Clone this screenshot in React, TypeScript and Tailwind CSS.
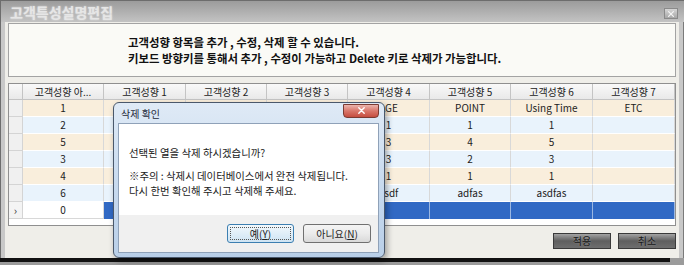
import React from "react";

const font = "font-['Noto_Sans_CJK_KR',sans-serif]";

const headers = ["고객성향 아...", "고객성향 1", "고객성향 2", "고객성향 3", "고객성향 4", "고객성향 5", "고객성향 6", "고객성향 7"];

// columns 1-3 sit under the confirm dialog, so they stay blank
const rows: string[][] = [
  ["1", "", "", "", "AGE", "POINT", "Using Time", "ETC"],
  ["2", "", "", "", "1", "1", "1", ""],
  ["5", "", "", "", "3", "4", "5", ""],
  ["3", "", "", "", "3", "2", "3", ""],
  ["4", "", "", "", "1", "1", "1", ""],
  ["6", "", "", "", "asdf", "adfas", "asdfas", ""],
];

const gridCols = "grid grid-cols-[14px_81px_82px_81px_81px_82px_81px_82px_82px]";

const CloseX: React.FC<{ size: number; stroke: string }> = ({ size, stroke }) => (
  <svg width={size} height={size} viewBox="0 0 10 10">
    <path d="M2 2 L8 8 M8 2 L2 8" stroke={stroke} strokeWidth="1.6" strokeLinecap="round" />
  </svg>
);

const DataGrid: React.FC = () => (
  <div className="h-[143px] border border-[#8f8f8f] bg-white overflow-hidden">
    <div className={`${gridCols} h-[16px] text-[10px] leading-none text-[#222]`}>
      <div className="border-r border-b border-[#c4c4c4] bg-gradient-to-b from-[#f9f9f9] to-[#e9e9e9]" />
      {headers.map((h) => (
        <div
          key={h}
          className="flex items-center justify-center border-r border-b border-[#c4c4c4] bg-gradient-to-b from-[#f9f9f9] to-[#e9e9e9]"
        >
          {h}
        </div>
      ))}
    </div>
    {rows.map((r, i) => (
      <div key={i} className={`${gridCols} h-[17px] text-[10px] leading-none text-[#222]`}>
        <div className="border-r border-b border-[#d4d4d4] bg-[#f0f0f0]" />
        {r.map((c, j) => (
          <div
            key={j}
            className={`flex items-center justify-center border-r border-b border-r-[#d8d8d8] border-b-white ${
              i % 2 === 0 ? "bg-[#f9eedc]" : "bg-[#e9f3fc]"
            }`}
          >
            {c}
          </div>
        ))}
      </div>
    ))}
    <div className={`${gridCols} h-[17px] text-[10px] leading-none text-[#222]`}>
      <div className="flex items-center justify-center border-r border-b border-[#d4d4d4] bg-[#f4f4f4] text-[11px] text-[#333]">
        ›
      </div>
      <div className="flex items-center justify-center border-r border-b border-[#d8d8d8] bg-white">0</div>
      {[1, 2, 3, 4, 5, 6, 7].map((k) => (
        <div key={k} className="border-r border-[#9bb7e2] bg-[#3169c4]" />
      ))}
    </div>
  </div>
);

const ConfirmDialog: React.FC = () => (
  <div className="absolute left-[113px] top-[102px] w-[272px] h-[156px] rounded-[6px] border border-[#4a586b] bg-gradient-to-b from-[#dfeaf6] via-[#c9dbef] to-[#b9cfe8] shadow-[2px_3px_6px_rgba(0,0,0,0.35)]">
    <div className="flex h-[20px] items-center justify-between pl-[7px] pr-[5px]">
      <span className="text-[10px] leading-none text-[#1e2a3a] pt-[2px]">삭제 확인</span>
      <div className="flex h-[14px] w-[36px] -mt-[5px] items-center justify-center rounded-b-[4px] border border-[#7b3b32] bg-gradient-to-b from-[#eab5ad] via-[#d9766a] to-[#c54d3f]">
        <CloseX size={9} stroke="#ffffff" />
      </div>
    </div>
    <div className="ml-[4px] mr-[5px] h-[130px] border border-[#8fa1b8] bg-white">
      <div className="h-[91px] pl-[10px] pt-[23px] text-[10.4px] leading-[12px] text-[#222]">
        <p>선택된 열을 삭제 하시겠습니까?</p>
        <p className="mt-[9px] leading-[15px]">
          ※주의 : 삭제시 데이터베이스에서 완전 삭제됩니다.
          <br />
          다시 한번 확인해 주시고 삭제해 주세요.
        </p>
      </div>
      <div className="flex h-[37px] justify-end gap-[9px] bg-[#f0f0f0] pr-[7px] pt-[9px]">
        <button className="flex h-[19px] w-[67px] items-center justify-center rounded-[3px] border border-[#3c7fb1] bg-gradient-to-b from-[#f2f8fc] via-[#e0eef8] to-[#cfe4f3] p-[2px]">
          <span className="flex h-full w-full items-center justify-center border border-dotted border-[#555] text-[10px] leading-none text-[#222]">
            예(<span className="underline">Y</span>)
          </span>
        </button>
        <button className="flex h-[19px] w-[68px] items-center justify-center rounded-[3px] border border-[#707070] bg-gradient-to-b from-[#f4f4f4] via-[#ebebeb] to-[#d9d9d9] text-[10px] leading-none text-[#222]">
          아니요(<span className="underline">N</span>)
        </button>
      </div>
    </div>
  </div>
);

const DarkButton: React.FC<{ label: string }> = ({ label }) => (
  <button className="flex h-[16px] w-[58px] items-center justify-center border border-[#3a3a3a] bg-gradient-to-b from-[#a4a4a4] via-[#5f5f5f] to-[#6e6e6e] text-[10px] leading-none text-[#161616] [text-shadow:0_0_2px_rgba(255,255,255,0.35)]">
    {label}
  </button>
);

export default function App() {
  return (
    <div className={`relative h-[265px] w-[684px] overflow-hidden bg-[#9b9b9b] ${font}`}>
      <div className="flex h-[22px] items-center justify-between border-t border-l border-[#6d6d6d] bg-gradient-to-b from-[#9c9c9c] to-[#c3c3c3] pl-[9px] pr-[6px]">
        <span className="text-[14px] font-bold leading-none text-[#e6e6e6] [text-shadow:0_0_2px_rgba(255,255,255,0.6)]">
          고객특성설명편집
        </span>
        <div className="flex h-[11px] w-[14px] items-center justify-center border border-[#8a8a8a] bg-gradient-to-b from-[#d6d6d6] to-[#a8a8a8] mt-[4px]">
          <CloseX size={8} stroke="#f4f4f4" />
        </div>
      </div>
      <div className="flex h-[236px]">
        <div className="w-[5px] border-l border-[#6d6d6d] bg-[#c8c8c8]" />
        <div className="flex w-[674px] flex-col bg-[#efeee9] pl-[3px] pr-[3px] pt-[1px]">
          <div className="flex h-[54px] flex-col justify-center gap-[5px] border border-[#a3a3a3] bg-[#fafaf6] pl-[119px] text-[11.4px] font-bold leading-[11px] text-[#111]">
            <p>고객성향 항목을 추가 , 수정, 삭제 할 수 있습니다.</p>
            <p>키보드 방향키를 통해서 추가 , 수정이 가능하고 Delete 키로 삭제가 가능합니다.</p>
          </div>
          <div className="mt-[6px]">
            <DataGrid />
          </div>
          <div className="mt-[7px] flex justify-end gap-[7px]">
            <DarkButton label="적용" />
            <DarkButton label="취소" />
          </div>
        </div>
        <div className="w-[5px] border-r border-[#7a7a7a] bg-[#c8c8c8]" />
      </div>
      <div className="h-[4px] w-[670px] bg-[#111]" />
      <ConfirmDialog />
    </div>
  );
}
